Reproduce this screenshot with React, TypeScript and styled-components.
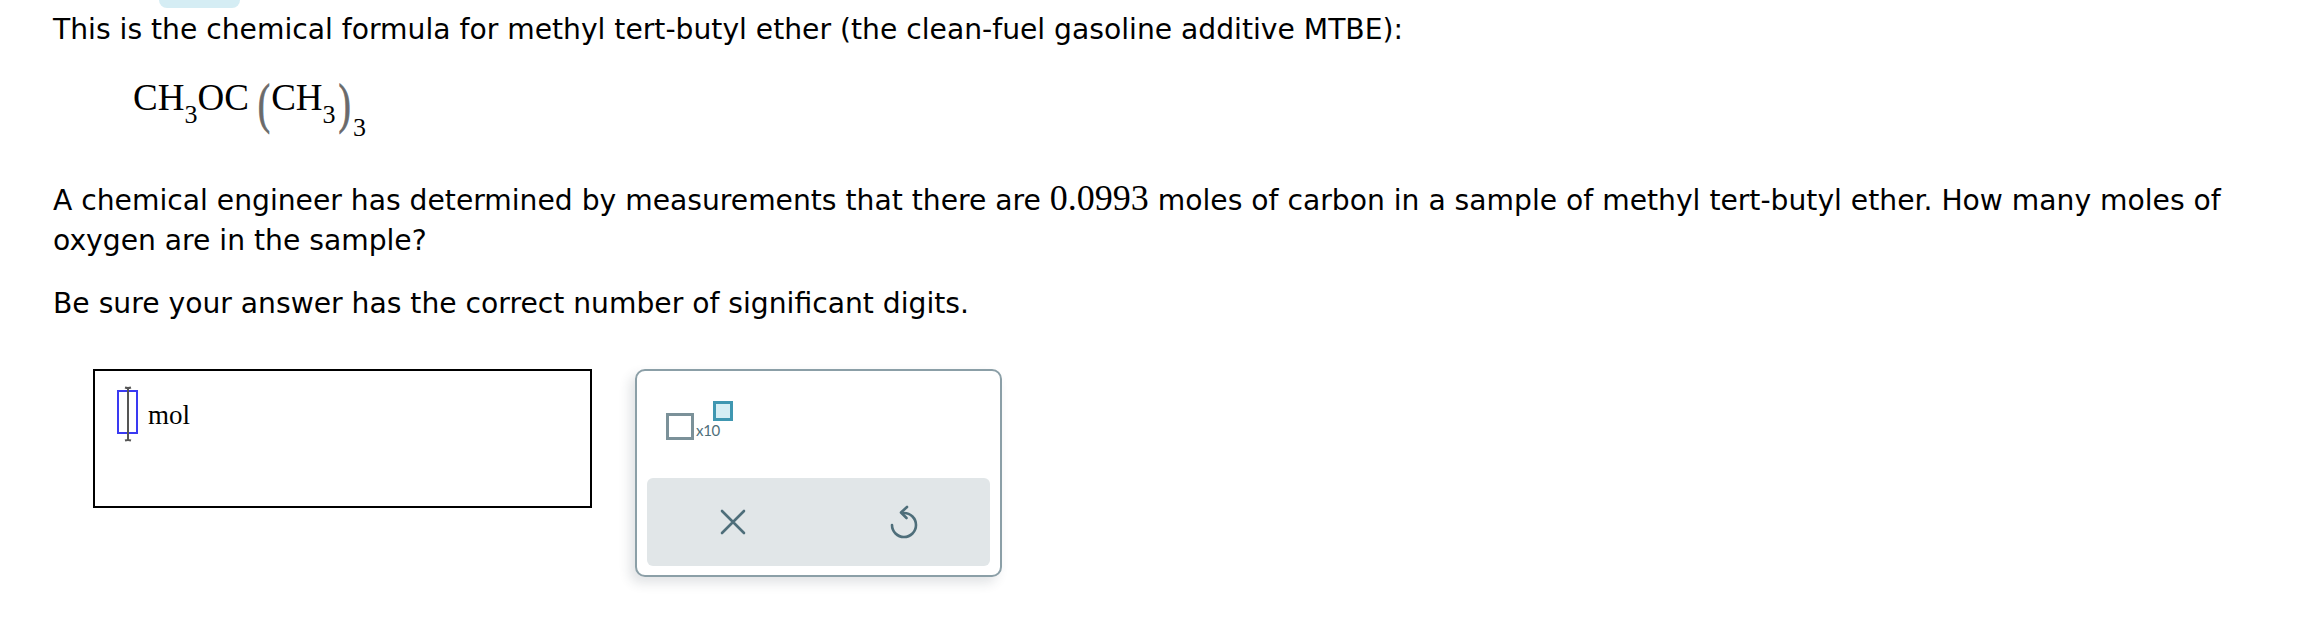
import React from 'react';
import styled, { createGlobalStyle } from 'styled-components';

const GlobalStyle = createGlobalStyle`
  html, body { margin: 0; padding: 0; background: #ffffff; }
  body { font-family: "DejaVu Sans", Verdana, sans-serif; color: #000; }
`;

const Page = styled.div`
  width: 2314px;
  height: 640px;
  box-sizing: border-box;
  padding-left: 53px;
  overflow: hidden;
`;

const TopTab = styled.div`
  width: 81px;
  height: 8px;
  margin-left: 106px;
  background: #d5edf4;
  border-radius: 0 0 14px 14px;
`;

const Text = styled.p<{ $top?: number }>`
  margin: ${(p) => p.$top ?? 0}px 0 0 0;
  font-size: 28.2px;
  line-height: 40px;
  white-space: nowrap;
`;

const Num = styled.span`
  font-family: "Liberation Serif", "Times New Roman", serif;
  font-size: 36px;
  line-height: 0;
`;

const Formula = styled.div`
  margin: 29px 0 0 80px;
  height: 37px;
  font-family: "Liberation Serif", "Times New Roman", serif;
  font-size: 37px;
  line-height: 37px;
  white-space: nowrap;
`;

const Sub = styled.span<{ $drop: number; $ml?: number }>`
  font-size: 26px;
  line-height: 0;
  vertical-align: -${(p) => p.$drop}px;
  margin-left: ${(p) => p.$ml ?? 0}px;
`;

const Paren = styled.span<{ $ml?: number; $mr?: number }>`
  display: inline-block;
  color: #6a6a6a;
  -webkit-text-stroke: 0.6px #6a6a6a;
  margin-left: ${(p) => p.$ml ?? 0}px;
  margin-right: ${(p) => p.$mr ?? 0}px;
  transform: translateY(6px) scaleY(1.5);
`;

const AnswerRow = styled.div`
  display: flex;
  align-items: flex-start;
  gap: 43px;
  margin: 45px 0 0 40px;
`;

const AnswerBox = styled.div`
  width: 499px;
  height: 139px;
  box-sizing: border-box;
  border: 2px solid #000;
  padding: 19px 22px;
  display: flex;
  align-items: flex-start;
`;

const Cursor = styled.div`
  position: relative;
  width: 21px;
  height: 44px;
  box-sizing: border-box;
  border: 2px solid #3a3af2;
`;

const IBeam = styled.svg`
  position: absolute;
  left: 3.5px;
  top: -6px;
`;

const Unit = styled.span`
  margin: 3px 0 0 10px;
  font-family: "Liberation Serif", "Times New Roman", serif;
  font-size: 27px;
  line-height: 44px;
`;

const Keypad = styled.div`
  width: 367px;
  height: 208px;
  box-sizing: border-box;
  border: 2px solid #8b9fa7;
  border-radius: 10px;
  background: #fff;
  box-shadow: -5px 6px 12px rgba(40, 60, 70, 0.14);
  display: flex;
  flex-direction: column;
`;

const KeypadTop = styled.div`
  height: 107px;
  box-sizing: border-box;
  padding: 30px 0 0 29px;
`;

const ExpButton = styled.div`
  display: inline-flex;
  align-items: flex-start;
  height: 39px;
`;

const BigSquare = styled.div`
  width: 28px;
  height: 27px;
  margin-top: 12px;
  box-sizing: border-box;
  border: 3px solid #7b9199;
`;

const ExpLabel = styled.span`
  margin: 22px 0 0 2px;
  font-family: Lato, "Open Sans", sans-serif;
  font-size: 15px;
  line-height: 15px;
  color: #4f6f7a;
  letter-spacing: -0.3px;
`;

const SmallSquare = styled.div`
  width: 20px;
  height: 20px;
  margin-left: -7px;
  box-sizing: border-box;
  border: 3px solid #3f97b1;
  background: #d6eef4;
`;

const KeyBar = styled.div`
  margin: 0 10px;
  height: 88px;
  border-radius: 6px;
  background: #e1e6e8;
  display: grid;
  grid-template-columns: 1fr 1fr;
  align-items: center;
  justify-items: center;
`;

const KeyIcon = styled.svg`
  display: block;
  color: #4e6e7a;
`;

export default function App() {
  return (
    <>
      <GlobalStyle />
      <Page>
        <TopTab />
        <Text $top={2}>
          This is the chemical formula for methyl tert-butyl ether (the clean-fuel gasoline additive MTBE):
        </Text>
        <Formula>
          CH<Sub $drop={13}>3</Sub>OC
          <Paren $ml={9} $mr={1}>(</Paren>CH<Sub $drop={13}>3</Sub>
          <Paren $ml={3} $mr={2}>)</Paren>
          <Sub $drop={26}>3</Sub>
        </Formula>
        <Text $top={65}>
          A chemical engineer has determined by measurements that there are <Num>0.0993</Num> moles of carbon in a sample of methyl tert-butyl ether. How many moles of
          <br />
          oxygen are in the sample?
        </Text>
        <Text $top={23}>Be sure your answer has the correct number of significant digits.</Text>
        <AnswerRow>
          <AnswerBox>
            <Cursor>
              <IBeam width="10" height="56" viewBox="0 0 10 56">
                <path d="M5 2 V54 M2 1.5 Q5 2.5 8 1.5 M2 54.5 Q5 53.5 8 54.5" stroke="#555" strokeWidth="2" fill="none" />
              </IBeam>
            </Cursor>
            <Unit>mol</Unit>
          </AnswerBox>
          <Keypad>
            <KeypadTop>
              <ExpButton>
                <BigSquare />
                <ExpLabel>x10</ExpLabel>
                <SmallSquare />
              </ExpButton>
            </KeypadTop>
            <KeyBar>
              <KeyIcon width="26" height="26" viewBox="0 0 26 26">
                <path d="M2 2 L24 24 M24 2 L2 24" stroke="currentColor" strokeWidth="2.6" strokeLinecap="round" fill="none" />
              </KeyIcon>
              <KeyIcon width="30" height="36" viewBox="0 0 30 36">
                <path d="M15 9 A12 12 0 1 1 3 21" stroke="currentColor" strokeWidth="2.6" strokeLinecap="round" fill="none" />
                <path d="M18 3 L12 8.5 L17.5 14" stroke="currentColor" strokeWidth="2.6" strokeLinecap="round" strokeLinejoin="round" fill="none" />
              </KeyIcon>
            </KeyBar>
          </Keypad>
        </AnswerRow>
      </Page>
    </>
  );
}
